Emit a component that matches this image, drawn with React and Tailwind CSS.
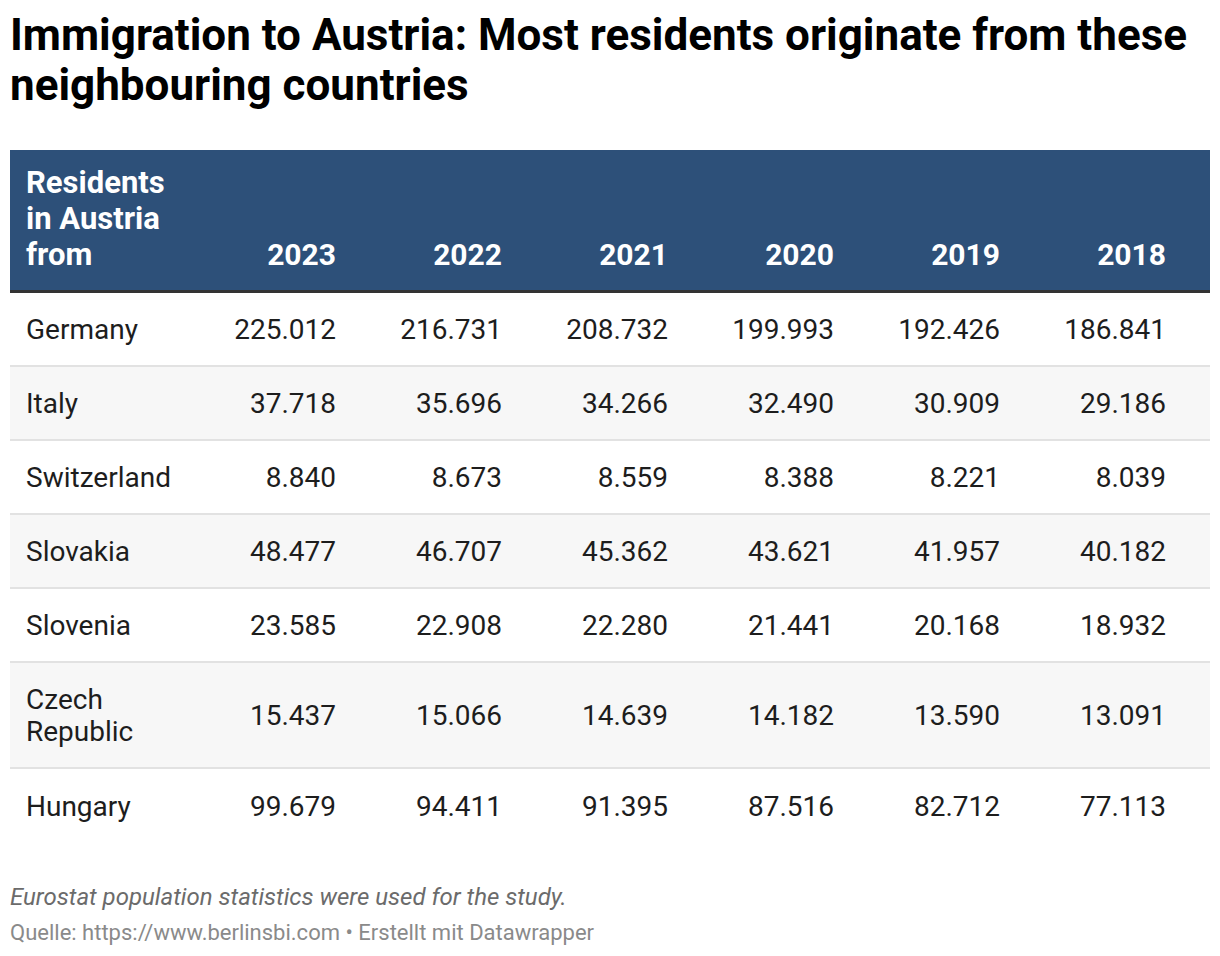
import React from "react";

const years = ["2023", "2022", "2021", "2020", "2019", "2018"];
const rows = [
  { name: ["Germany"], v: ["225.012", "216.731", "208.732", "199.993", "192.426", "186.841"] },
  { name: ["Italy"], v: ["37.718", "35.696", "34.266", "32.490", "30.909", "29.186"] },
  { name: ["Switzerland"], v: ["8.840", "8.673", "8.559", "8.388", "8.221", "8.039"] },
  { name: ["Slovakia"], v: ["48.477", "46.707", "45.362", "43.621", "41.957", "40.182"] },
  { name: ["Slovenia"], v: ["23.585", "22.908", "22.280", "21.441", "20.168", "18.932"] },
  { name: ["Czech", "Republic"], v: ["15.437", "15.066", "14.639", "14.182", "13.590", "13.091"] },
  { name: ["Hungary"], v: ["99.679", "94.411", "91.395", "87.516", "82.712", "77.113"] },
];

const cols = "grid grid-cols-[204px_166px_166px_166px_166px_166px_166px]";

export default function App() {
  return (
    <div className="w-[1220px] h-[956px] bg-white px-[10px] pt-[10px] font-['Roboto',sans-serif] text-[#1d1d1d]">
      <h1 className="text-[44px] leading-[50px] font-bold text-black">
        Immigration to Austria: Most residents originate from these neighbouring countries
      </h1>
      <div className="mt-[40px] w-[1200px]">
        <div className={`${cols} bg-[#2d5079] text-white font-bold text-[30px] leading-[36px] h-[143px] items-end pb-[17px] border-b-[3px] border-[#333333]`}>
          <div className="pl-[16px] text-[31px]">
            <div>Residents</div>
            <div>in Austria</div>
            <div>from</div>
          </div>
          {years.map((y) => (
            <div key={y} className="text-right pr-[44px]">{y}</div>
          ))}
        </div>
        {rows.map((r, i) => (
          <div
            key={i}
            className={`${cols} items-center text-[28px] leading-[32px] pt-[2px] ${i % 2 === 1 ? "bg-[#f7f7f7]" : "bg-white"} ${i < rows.length - 1 ? "border-b-2 border-[#e2e2e2]" : ""} ${r.name.length > 1 ? "h-[106px]" : "h-[74px]"}`}
          >
            <div className="pl-[16px]">
              {r.name.map((n) => (
                <div key={n}>{n}</div>
              ))}
            </div>
            {r.v.map((v, j) => (
              <div key={j} className="text-right pr-[44px]">{v}</div>
            ))}
          </div>
        ))}
      </div>
      <div className="mt-[39px] italic text-[24px] leading-[30px] text-[#6b6b6b]">
        Eurostat population statistics were used for the study.
      </div>
      <div className="mt-[7px] text-[22px] leading-[28px] text-[#8a8a8a]">
        Quelle: https://www.berlinsbi.com • Erstellt mit Datawrapper
      </div>
    </div>
  );
}
